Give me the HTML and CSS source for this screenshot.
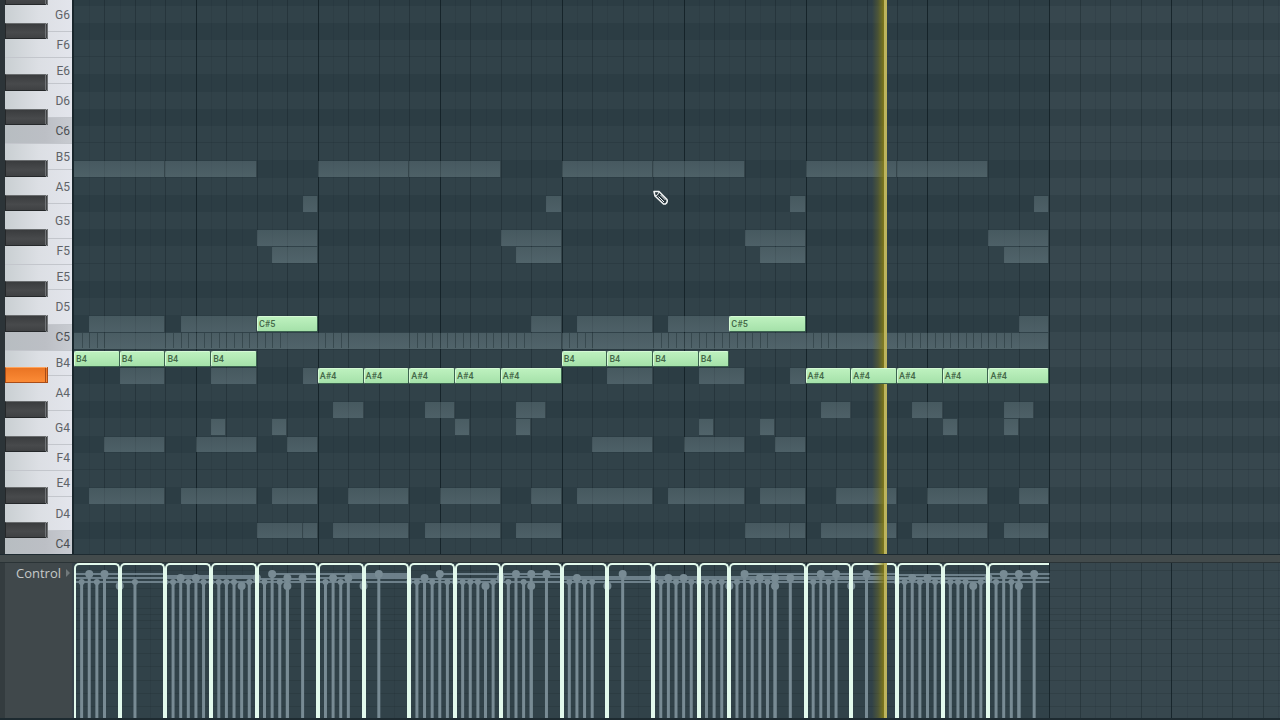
FILE: index.html
```html
<!DOCTYPE html>
<html lang="en">
<head>
<meta charset="utf-8">
<title>Piano roll</title>
<link rel="stylesheet" href="styles.css">
</head>
<body>
<main class="editor">
  <section class="roll">
    <div class="piano" id="piano"></div>
    <div class="grid" id="grid"></div>
  </section>
  <div class="splitter"></div>
  <section class="control">
    <div class="control-side">
      <button class="control-button" type="button">Control <span class="arrow"></span></button>
    </div>
    <div class="lane" id="lane"></div>
  </section>
</main>
<script src="script.js"></script>
</body>
</html>
```
FILE: styles.css
```css
* {
  box-sizing: border-box;
}

body {
  margin: 0;
  background: #3e4749;
  font-family: Roboto, "Liberation Sans", sans-serif;
}

.editor {
  display: flex;
  flex-direction: column;
  height: 100vh;
  overflow: hidden;
  border-bottom: 2px solid #1d2a30;
}

.roll {
  display: flex;
  flex: 1;
  min-height: 0;
}

.piano {
  position: relative;
  display: flex;
  flex: none;
  flex-direction: column;
  justify-content: flex-end;
  width: 74px;
  overflow: hidden;
  border-right: 2px solid #19262c;
  border-left: 5px solid #2c3438;
}

.white-key {
  display: flex;
  flex: none;
  align-items: center;
  justify-content: flex-end;
  padding-right: 2px;
  border-top: 1px solid #c3c6cc;
  background: linear-gradient(90deg, #c9cfd2, #dcdfe4 50%, #e3e5ec);
  color: #606368;
  font-size: 12px;
  font-weight: 400;
}

.white-key.root {
  background: linear-gradient(90deg, #b7bdc1, #bcbfc5 60%, #c8cbd1);
  color: #4c4f53;
}

/* The lowest key runs on under the splitter. */
.white-key.lowest {
  margin-bottom: -2px;
}

.black-key {
  position: absolute;
  left: 0;
  width: 43px;
  border: 1px solid #25282a;
  border-top-color: #686b6d;
  border-right: 3px double #717477;
  background: linear-gradient(#3a3c3e, #484a4c 60%, #3f4143);
}

.black-key.pressed {
  border-color: #a94d18;
  border-top-color: #ffa35a;
  background: linear-gradient(#ea7423, #fb8b36);
}

.grid,
.lane {
  position: relative;
  flex: 1;
  overflow: hidden;
  background: #37474e;
}

.row {
  position: absolute;
  right: 0;
  left: 0;
}

.row.dark {
  background: #314148;
}

.row.divided {
  border-bottom: 1px solid #303f46;
}

.played {
  position: absolute;
  top: 0;
  bottom: 0;
  left: 0;
  background: rgba(16, 36, 44, 0.13);
}

.rule {
  position: absolute;
  top: 0;
  bottom: 0;
  width: 1px;
  background: rgba(20, 34, 40, 0.1);
}

.rule.beat {
  background: rgba(20, 34, 40, 0.38);
}

.rule.bar {
  background: rgba(12, 24, 30, 0.7);
}

.level {
  position: absolute;
  right: 0;
  left: 0;
  height: 1px;
  background: rgba(20, 34, 40, 0.18);
}

.ghost,
.note {
  position: absolute;
  margin-top: 1px;
  border-right: 1px solid #35454b;
}

.ghost {
  background: linear-gradient(rgba(132, 154, 160, 0.3), rgba(132, 154, 160, 0.38));
}

.tick {
  position: absolute;
  width: 1px;
  background: rgba(30, 46, 52, 0.45);
}

.note {
  overflow: hidden;
  padding-left: 1px;
  border: 1px solid #3c6450;
  border-top-color: #d5fad5;
  border-left-color: #d5fad5;
  border-radius: 2px;
  background: linear-gradient(#bdf1be, #a5e1a9);
  color: #446848;
  font-size: 9px;
  font-weight: 500;
  line-height: 15px;
}

.playhead {
  position: absolute;
  top: 0;
  bottom: 0;
  width: 15px;
  margin-left: -14px;
  border-right: 3px solid #bdb45c;
  background: linear-gradient(90deg, rgba(140, 130, 20, 0), rgba(140, 130, 20, 0.3) 50%, rgba(140, 130, 20, 0.85));
}

.pencil {
  position: absolute;
  width: 16px;
  height: 16px;
}

.splitter {
  flex: none;
  height: 9px;
  border-top: 1px solid #1e2b31;
  border-bottom: 1px solid #2a3336;
  background: #434b4c;
}

.control {
  display: flex;
  flex: none;
  height: 155px;
}

.control-side {
  flex: none;
  width: 74px;
  border-right: 2px solid #37424a;
  border-left: 5px solid #343c3f;
  background: #40484b;
}

.control-button {
  display: flex;
  align-items: center;
  gap: 5px;
  padding: 0 0 0 11px;
  border: 0;
  background: none;
  color: #c6c9c9;
  font: 500 13px/20px "Open Sans", "Noto Sans", sans-serif;
}

.arrow {
  border: 4px solid transparent;
  border-right: 0;
  border-left-color: #71797b;
}

.stems {
  position: absolute;
  width: 100%;
  height: 100%;
}

.stem {
  stroke: #788b94;
  stroke-width: 3;
}

.head {
  fill: #788b94;
}

.hold {
  stroke: #8195a0;
  stroke-width: 2;
  opacity: 0.75;
}

.velocity {
  position: absolute;
  top: 0;
  bottom: 0;
  border: 2px solid #e2f9ec;
  border-bottom: 0;
  border-radius: 5px 5px 0 0;
}

.velocity.last {
  border-right: 0;
  border-top-right-radius: 0;
}
```
FILE: script.js
```js
const STEPS = 79.13;
const ROWS = 32.2;
const ROWS_ABOVE = 32.32;
const END = 64;
const PLAYHEAD = 53.3;
const NAMES = ["C", "C#", "D", "D#", "E", "F", "F#", "G", "G#", "A", "A#", "B"];
const WHITE = [["C", 1.5], ["D", 2], ["E", 1.5], ["F", 1.5], ["G", 2], ["A", 2], ["B", 1.5]];

const piano = document.getElementById("piano");
const grid = document.getElementById("grid");
const lane = document.getElementById("lane");

const xPct = step => step / STEPS * 100 + "%";
const topPct = pitch => (ROWS_ABOVE - pitch - 1) / ROWS * 100 + "%";
const rowPct = rows => rows / ROWS * 100 + "%";

function add(parent, className, style, text) {
  const el = document.createElement("div");
  el.className = className;
  Object.assign(el.style, style);
  if (text) el.textContent = text;
  parent.append(el);
  return el;
}

// Keyboard, highest key first
const keys = [];
for (let octave = 4; octave <= 6; octave++) {
  for (const [name, rows] of WHITE) {
    if (octave === 6 && (name === "A" || name === "B")) continue;
    keys.unshift([name + octave, rows]);
  }
}
// One unlabelled key closes the top edge
add(piano, "white-key", { height: rowPct(2) });
for (const [label, rows] of keys) {
  const kind = (label[0] === "C" ? " root" : "") + (label === "C4" ? " lowest" : "");
  add(piano, "white-key" + kind, { height: rowPct(rows) }, label);
}
for (let pitch = 0; pitch < 33; pitch++) {
  const name = NAMES[pitch % 12];
  const box = { top: topPct(pitch), height: rowPct(1) };
  if (name.length === 2) {
    add(piano, "black-key" + (pitch === 10 ? " pressed" : ""), { top: box.top, height: rowPct(0.96) });
    add(grid, "row dark", box);
  } else if (name === "C" || name === "F") {
    add(grid, "row divided", box);
  }
}

// Time lines
for (const area of [grid, lane]) {
  add(area, "played", { width: xPct(END) });
  for (let step = 1; step < STEPS; step++) {
    const kind = step % 8 === 0 ? " bar" : step % 2 === 0 ? " beat" : "";
    add(area, "rule" + kind, { left: xPct(step) });
  }
}

// Notes of the other channels: pitch above C4, then start and end steps
const half = [
  [22, 0, 6], [22, 6, 12], [22, 16, 22], [22, 22, 28],
  [20, 15, 16], [20, 31, 32],
  [18, 12, 16], [18, 28, 32],
  [17, 13, 16], [17, 29, 32],
  [13, 1, 6], [13, 7, 12], [13, 30, 32],
  [12, 0, 32],
  [10, 3, 6], [10, 9, 12], [10, 15, 16],
  [8, 17, 19], [8, 23, 25], [8, 29, 31],
  [7, 9, 10], [7, 13, 14], [7, 25, 26], [7, 29, 30],
  [6, 2, 6], [6, 8, 12], [6, 14, 16],
  [3, 1, 6], [3, 7, 12], [3, 13, 16], [3, 18, 22], [3, 24, 28], [3, 30, 32],
  [1, 12, 15], [1, 15, 16], [1, 17, 22], [1, 23, 28], [1, 29, 32]
];
for (const offset of [0, 32]) {
  for (const [pitch, start, end] of half) {
    add(grid, "ghost", {
      left: xPct(start + offset), width: xPct(end - start),
      top: topPct(pitch), height: rowPct(0.92)
    });
  }
}
for (let bar = 0; bar < END; bar += 16) {
  for (const t of [0.5, 1, 1.5, 2, 6, 6.5, 7, 7.5, 8, 8.5, 9, 9.5, 10, 10.5, 11, 11.5, 12, 12.5, 13, 13.5]) {
    add(grid, "tick", { left: xPct(bar + t), top: topPct(11.95), height: rowPct(0.85) });
  }
}

add(grid, "playhead", { left: xPct(PLAYHEAD) });

// Notes of the selected channel
const notes = [
  [11, 0, 3], [11, 3, 6], [11, 6, 9], [11, 9, 12], [13, 12, 16],
  [10, 16, 19], [10, 19, 22], [10, 22, 25], [10, 25, 28], [10, 28, 32],
  [11, 32, 35], [11, 35, 38], [11, 38, 41], [11, 41, 43], [13, 43, 48],
  [10, 48, 51], [10, 51, 54], [10, 54, 57], [10, 57, 60], [10, 60, 64]
];
for (const [pitch, start, end] of notes) {
  add(grid, "note", {
    left: xPct(start), width: xPct(end - start),
    top: topPct(pitch), height: rowPct(0.94)
  }, NAMES[pitch % 12] + (4 + Math.floor(pitch / 12)));
}

const pencil = add(grid, "pencil", { left: xPct(38), top: "34.3%" });
pencil.innerHTML = '<svg viewBox="0 0 16 16" width="16" height="16">' +
  '<path d="M1 1.5 L6 1.5 L14 9.5 Q15 12 12.5 14 L10.5 14 L2 6 Z" fill="#26343b" stroke="#f2f5f5" stroke-width="1.5" stroke-linejoin="round"/>' +
  '<path d="M2 6 Q5 6 6 2 M5.5 6.5 L11 12 M7.5 5 L12.5 10" fill="none" stroke="#f2f5f5" stroke-width="1"/></svg>';

// Control lane
for (const y of [7, 25, 33, 45, 51, 57, 65, 76, 90, 103, 117, 130, 143]) {
  add(lane, "level", { top: y / 155 * 100 + "%" });
}

const tall = 11, high = 15, low = 19, drop = 23;
const stems = [
  [[0.5, low], [1, tall], [1.5, low], [2, tall], [3, drop], [4, low],
   [6, low], [6.5, low], [7, high], [7.5, low], [8, high], [8.5, low], [9, low], [9.5, low], [10, low],
   [10.5, low], [11, drop], [11.5, low], [12, high], [12.5, low], [13, tall], [13.5, low],
   [14, high], [14, drop], [15, high]],
  [[0.5, low], [1, high], [1.5, low], [2, high], [3, drop], [4, tall],
   [6, low], [6.5, low], [7, high], [7.5, low], [8, tall], [8.5, low], [9, low], [9.5, low], [10, low],
   [10.5, low], [11, drop], [11.5, low], [12, high], [12.5, low], [13, tall], [13.5, low],
   [14, tall], [14, drop], [15, tall]],
  [[0.5, low], [1, high], [1.5, low], [2, low], [3, drop], [4, tall],
   [6, high], [6.5, low], [7, high], [7.5, low], [8, high], [8.5, low], [9, low], [9.5, low], [10, low],
   [10.5, low], [11, drop], [11.5, low], [12, tall], [12.5, low], [13, high],
   [13.5, low], [14, high], [14, drop], [15, high]],
  [[0.5, low], [1, tall], [1.5, low], [2, tall], [3, drop], [4, tall],
   [6, low], [6.5, low], [7, high], [7.5, low], [8, high], [8.5, low], [9, low], [9.5, low], [10, low],
   [10.5, low], [11, drop], [11.5, low], [12, high], [12.5, low], [13, tall], [13.5, low],
   [14, tall], [14, drop], [15, tall]]
];

// Held levels: start, end, y
const holds = [
  [0, 6, 11], [0, 12, 15], [0, 16, 19], [6, 12, 13], [12, 16, 16], [13, 16, 11],
  [16, 22, 11], [16, 22, 15], [16, 32, 19], [18, 22, 13], [22, 28, 16], [24, 32, 11], [28, 32, 14],
  [32, 48, 14], [32, 48, 16], [32, 64, 19], [44, 54, 11], [48, 54, 14], [48, 60, 16],
  [54, 60, 12], [54, 64, 15], [60, 64, 11]
];
let svg = '<svg class="stems" aria-hidden="true">';
for (const [start, end, y] of holds) {
  svg += `<line class="hold" x1="${xPct(start)}" x2="${xPct(end)}" y1="${y}" y2="${y}"/>`;
}
stems.forEach((bar, i) => {
  for (const [t, y] of bar) {
    const x = xPct(i * 16 + t);
    svg += `<line class="stem" x1="${x}" x2="${x}" y1="${y}" y2="100%"/>`;
    svg += `<circle class="head" cx="${x}" cy="${y}" r="${y === low ? 3 : 4}"/>`;
  }
});
lane.insertAdjacentHTML("beforeend", svg + "</svg>");

for (const [, start, end] of notes) {
  add(lane, "velocity" + (end === END ? " last" : ""), { left: xPct(start), width: xPct(end - start) });
}
add(lane, "playhead", { left: xPct(PLAYHEAD) });
```
